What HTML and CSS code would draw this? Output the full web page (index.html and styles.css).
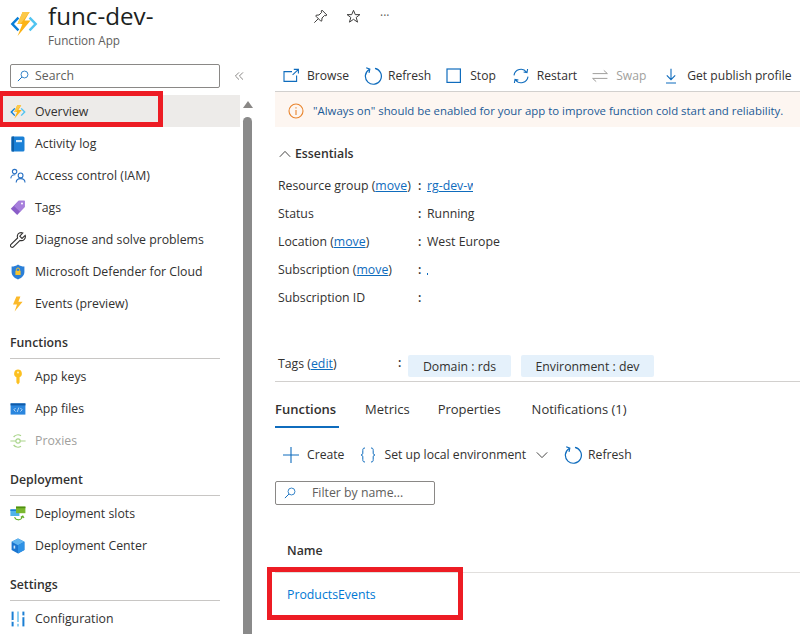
FILE: index.html
```html
<!DOCTYPE html>
<html lang="en">
<head>
<meta charset="utf-8">
<title>func-dev- Function App</title>
<link rel="stylesheet" href="styles.css">
</head>
<body>
<svg class="defs" width="0" height="0" aria-hidden="true">
  <defs>
    <symbol id="func" viewBox="0 0 28 28">
      <path d="M7.6 6.8 0.6 14l7 7.2 1.7-1.7L4 14l5.3-5.5z" fill="#0a7fd8"/>
      <path d="M20.4 6.8 27.4 14l-7 7.2-1.7-1.7L24 14l-5.3-5.5z" fill="#50c4f0"/>
      <path d="M19.6 2h-7L7.4 14h5L7.6 26 20.6 10.6h-6z" fill="#fbb316"/>
      <path d="M19.6 2h-7L7.4 14h3z" fill="#fcc94a"/>
    </symbol>
    <symbol id="refresh" viewBox="0 0 18 18">
      <path d="M5.2 2.4A8 8 0 1 0 11 1.4" fill="none" stroke="#0f6cbd" stroke-width="1.2"/>
      <path d="M2.2 0.8 5.8 2.2 5 5.8" fill="none" stroke="#0f6cbd" stroke-width="1.2"/>
    </symbol>
    <symbol id="lens" viewBox="0 0 16 16">
      <circle cx="10" cy="6" r="4.6" fill="none" stroke="#0f6cbd" stroke-width="1.1"/>
      <path d="M6.6 9.4 1.2 14.8" stroke="#0f6cbd" stroke-width="1.3"/>
    </symbol>
  </defs>
</svg>

<header class="header">
  <svg class="logo"><use href="#func"/></svg>
  <div class="titles">
    <h1 class="title">func-dev-</h1>
    <div class="subtitle">Function App</div>
  </div>
  <div class="header-actions">
    <svg class="ha-icon" viewBox="0 0 16 16"><path d="M9.6 1.2 14.8 6.4 13.8 7.2 12.4 6.8 9.6 9.6 9.4 12.6 8.4 13 3 7.6 3.4 6.6 6.4 6.4 9.2 3.6 8.8 2.2zM5.6 10.4 1.4 14.6" fill="none" stroke="#323130" stroke-width="1"/></svg>
    <svg class="ha-icon" viewBox="0 0 16 16"><path d="M8 1.4 9.9 6H14.8L10.9 9 12.3 14 8 11 3.7 14 5.1 9 1.2 6H6.1z" fill="none" stroke="#323130" stroke-width="1"/></svg>
    <span class="ha-more">···</span>
  </div>
</header>

<div class="layout">
  <aside class="sidebar">
    <div class="nav">
      <div class="search-row">
        <div class="search">
          <svg class="search-icon"><use href="#lens"/></svg>
          <span>Search</span>
        </div>
        <svg class="collapse" viewBox="0 0 10 10"><path d="M5 1.4 1.4 5 5 8.6M9 1.4 5.4 5 9 8.6" fill="none" stroke="#8a8886" stroke-width="1"/></svg>
      </div>

      <a class="item active"><svg class="ico"><use href="#func"/></svg>Overview</a>
      <a class="item"><svg class="ico" viewBox="0 0 16 16"><rect x="1.5" y="0.5" width="13" height="15" rx="1.5" fill="#1a80d6"/><rect x="1.5" y="0.5" width="2.5" height="15" fill="#0d5fa8"/><rect x="6" y="4" width="6" height="2.2" fill="#d8ecfb"/></svg>Activity log</a>
      <a class="item"><svg class="ico" viewBox="0 0 16 16"><g fill="none" stroke="#2a72c4" stroke-width="1.1"><circle cx="4.6" cy="3.6" r="2.2"/><path d="M0.8 10.4C1 7.4 3 6.6 5.4 6.8"/><circle cx="10.6" cy="7.4" r="2.4"/><path d="M6.2 14.6C6.2 11.8 8 10.6 10.6 10.6S15 11.8 15 14.6"/></g></svg>Access control (IAM)</a>
      <a class="item"><svg class="ico" viewBox="0 0 16 16"><path d="M8.6 0.8H14.6V7L7.2 15 0.8 8.8z" fill="#8a5dc8"/><path d="M8.6 0.8H14.6V7L10 11.8 4 6z" fill="#a77fdc"/><circle cx="12" cy="3.6" r="1" fill="#fff"/></svg>Tags</a>
      <a class="item"><svg class="ico" viewBox="0 0 16 16"><path d="M15.2 3.4 12 6.4 9.8 4.2 12.8 1C10.4 0 7.8 1.2 7.4 3.6 7.2 4.6 7.4 5.4 7.6 6L1 12.4C0.2 13.2 0.4 14.2 1 14.8S2.6 15.6 3.4 14.8L10 8.4C13 9.4 16.2 7 15.2 3.4z" fill="#fff" stroke="#323130" stroke-width="1.1"/></svg>Diagnose and solve problems</a>
      <a class="item"><svg class="ico" viewBox="0 0 16 16"><path d="M8 0.6C10 2 12 2.6 14.4 2.6V8C14.4 11.6 11.6 14 8 15.4 4.4 14 1.6 11.6 1.6 8V2.6C4 2.6 6 2 8 0.6z" fill="#2a7fd8"/><rect x="5.4" y="6.8" width="5.2" height="4.2" fill="#f6c330"/><path d="M6.4 6.8V5.6A1.6 1.6 0 0 1 9.6 5.6V6.8" fill="none" stroke="#f6c330" stroke-width="1"/></svg>Microsoft Defender for Cloud</a>
      <a class="item"><svg class="ico" viewBox="0 0 16 16"><path d="M10.4 0.4H6.4L3 8.6H7L4.6 15.6 12.6 5.8H8.4z" fill="#fbb92a"/></svg>Events (preview)</a>

      <div class="group">Functions</div>
      <a class="item"><svg class="ico" viewBox="0 0 16 16"><path d="M8 0.6A4 4 0 0 1 9.6 8.2V13.6L8 15.6 6.4 13.6V8.2A4 4 0 0 1 8 0.6z" fill="#fcc020"/><circle cx="8" cy="3.4" r="1" fill="#fff3c4"/></svg>App keys</a>
      <a class="item"><svg class="ico" viewBox="0 0 16 16"><rect x="0.6" y="2.4" width="14.8" height="11.2" fill="#2a86de"/><rect x="0.6" y="2.4" width="14.8" height="2" fill="#0f5aa8"/><path d="M5.6 7 3.8 8.8 5.6 10.6M10.4 7 12.2 8.8 10.4 10.6M8.8 6.6 7.2 11" fill="none" stroke="#cfe6fb" stroke-width="0.8"/></svg>App files</a>
      <a class="item dim"><svg class="ico" viewBox="0 0 16 16"><g fill="none" stroke="#a9d48a" stroke-width="1.2"><path d="M3.6 4A5.6 5.6 0 0 1 11 2.8M3.6 12A5.6 5.6 0 0 0 11 13.2"/><circle cx="8" cy="8" r="2.2"/><path d="M0.4 8H5.8M10.2 8H15.6"/></g></svg>Proxies</a>

      <div class="group">Deployment</div>
      <a class="item"><svg class="ico" viewBox="0 0 16 16"><rect x="0.4" y="3.4" width="9" height="6.6" fill="#50b4ea"/><rect x="0.4" y="3.4" width="9" height="1.6" fill="#1b7fd4"/><rect x="6" y="0.6" width="9.4" height="6.6" fill="#7ab82e"/><rect x="6" y="0.6" width="9.4" height="1.6" fill="#4f8f12"/><path d="M4.6 11.2C5.6 14.4 10.6 15.2 12.6 10.6M10.8 11.2 12.8 10 14 12" fill="none" stroke="#62ad24" stroke-width="1.1"/></svg>Deployment slots</a>
      <a class="item"><svg class="ico" viewBox="0 0 16 16"><path d="M8 0.6 14.4 3.8V12L8 15.4 1.6 12V3.8z" fill="#1b75cf"/><path d="M8 0.6 14.4 3.8 8 7.2 1.6 3.8z" fill="#62b6f0"/><path d="M8 7.2 14.4 3.8V12L8 15.4z" fill="#2e92e6"/><rect x="3.6" y="7.6" width="1.6" height="3" fill="#cde6fb"/></svg>Deployment Center</a>

      <div class="group">Settings</div>
      <a class="item"><svg class="ico" viewBox="0 0 16 16"><g stroke-width="2"><path d="M2.6 0.6V15.4" stroke="#1b7fd4"/><path d="M8 0.6V15.4" stroke="#8fd0f3"/><path d="M13.4 0.6V15.4" stroke="#1b7fd4"/></g><rect x="1.2" y="9" width="2.8" height="1.8" fill="#fff"/><rect x="6.6" y="11" width="2.8" height="1.8" fill="#fff"/><rect x="12" y="4.4" width="2.8" height="1.8" fill="#fff"/></svg>Configuration</a>
    </div>
    <div class="scrollbar">
      <span class="scroll-arrow"></span>
      <span class="scroll-thumb"></span>
    </div>
  </aside>

  <main class="main">
    <div class="toolbar">
      <span class="tool tool-browse"><svg class="t-icon" viewBox="0 0 16 16"><path d="M9 3.6H1V13.4H13.6V7.6M10.8 1.4H15.4V5.6M15.2 1.6 9.6 6.8" fill="none" stroke="#0f6cbd" stroke-width="1.1"/></svg>Browse</span>
      <span class="tool tool-refresh"><svg class="t-refresh"><use href="#refresh"/></svg>Refresh</span>
      <span class="tool tool-stop"><svg class="t-icon" viewBox="0 0 16 16"><rect x="1" y="1" width="13.4" height="13.4" fill="none" stroke="#0f6cbd" stroke-width="1.2"/></svg>Stop</span>
      <span class="tool tool-restart"><svg class="t-icon" viewBox="0 0 16 16"><g fill="none" stroke="#0f6cbd" stroke-width="1.1"><path d="M1 7.4A7 7 0 0 1 13.6 4.2M14.6 1 14 4.6 10.6 4"/><path d="M15 8.6A7 7 0 0 1 2.4 11.8M1.4 15 2 11.4 5.4 12"/></g></svg>Restart</span>
      <span class="tool tool-swap dim"><svg class="t-icon" viewBox="0 0 16 16"><path d="M0.6 5.6H15.4M11.8 2.4 15.4 5.6M15.4 10.4H0.6M4.2 13.6 0.6 10.4" fill="none" stroke="#a19f9d" stroke-width="1"/></svg>Swap</span>
      <span class="tool tool-get"><svg class="t-icon" viewBox="0 0 16 16"><path d="M8 0.8V11.4M3.8 7.4 8 11.6 12.2 7.4M3 15H13" fill="none" stroke="#0f6cbd" stroke-width="1.1"/></svg>Get publish profile</span>
    </div>

    <div class="banner">
      <svg class="b-icon" viewBox="0 0 16 16"><circle cx="8" cy="8" r="7" fill="none" stroke="#e9842c" stroke-width="1.1"/><path d="M8 7V12M8 4.2V5.6" stroke="#e9842c" stroke-width="1.1"/></svg>
      <span>"Always on" should be enabled for your app to improve function cold start and reliability.</span>
    </div>

    <div class="essentials-head">
      <svg class="chev" viewBox="0 0 12 8"><path d="M0.8 6.8 6 1.4 11.2 6.8" fill="none" stroke="#323130" stroke-width="0.9"/></svg>
      <span>Essentials</span>
    </div>

    <dl class="props">
      <div class="prop"><dt>Resource group (<a class="link">move</a>)</dt><dd><b class="colon">:</b><a class="link clip">rg-dev-west</a></dd></div>
      <div class="prop"><dt>Status</dt><dd><b class="colon">:</b>Running</dd></div>
      <div class="prop"><dt>Location (<a class="link">move</a>)</dt><dd><b class="colon">:</b>West Europe</dd></div>
      <div class="prop"><dt>Subscription (<a class="link">move</a>)</dt><dd><b class="colon">:</b><i class="speck"></i></dd></div>
      <div class="prop"><dt>Subscription ID</dt><dd><b class="colon">:</b></dd></div>
    </dl>

    <div class="tags-row">
      <span class="tags-label">Tags (<a class="link">edit</a>)</span>
      <b class="colon tags-colon">:</b>
      <span class="pill pill-a">Domain : rds</span>
      <span class="pill pill-b">Environment : dev</span>
    </div>

    <nav class="tabs">
      <span class="tab on">Functions</span>
      <span class="tab">Metrics</span>
      <span class="tab tab-props">Properties</span>
      <span class="tab">Notifications (1)</span>
    </nav>

    <div class="subtools">
      <span class="sub sub-create"><svg class="s-plus" viewBox="0 0 16 16"><path d="M8 0V16M0 8H16" stroke="#0f6cbd" stroke-width="1.1"/></svg>Create</span>
      <span class="sub sub-local"><svg class="s-braces" viewBox="0 0 16 16"><path d="M5 1C3 1 2.8 2 2.8 3.4V6C2.8 7.2 2.2 7.8 1 8 2.2 8.2 2.8 8.8 2.8 10V12.6C2.8 14 3 15 5 15M11 1C13 1 13.2 2 13.2 3.4V6C13.2 7.2 13.8 7.8 15 8 13.8 8.2 13.2 8.8 13.2 10V12.6C13.2 14 13 15 11 15" fill="none" stroke="#0f6cbd" stroke-width="1"/></svg>Set up local environment<svg class="s-chev" viewBox="0 0 12 8"><path d="M0.8 1.4 6 6.6 11.2 1.4" fill="none" stroke="#323130" stroke-width="0.9"/></svg></span>
      <span class="sub sub-refresh"><svg class="t-refresh"><use href="#refresh"/></svg>Refresh</span>
    </div>

    <div class="filter">
      <svg class="search-icon filter-icon"><use href="#lens"/></svg>
      <span>Filter by name...</span>
    </div>

    <div class="th">Name</div>
    <div class="td"><a class="fn-link">ProductsEvents</a></div>
  </main>
</div>

<div class="mark mark-overview"></div>
<div class="mark mark-fn"></div>
</body>
</html>
```
FILE: styles.css
```css
* { box-sizing: border-box; }
html, body { margin: 0; padding: 0; }
body {
  width: 800px;
  height: 634px;
  overflow: hidden;
  position: relative;
  background: #fff;
  color: #323130;
  font-family: "Open Sans", "Noto Sans", sans-serif;
  font-size: 12.3px;
  line-height: 16px;
}
.defs { position: absolute; }
a { color: inherit; text-decoration: none; }

.header { height: 60px; display: flex; }
.logo { width: 28px; height: 28px; margin: 10px 0 0 10px; flex: none; }
.titles { width: 265px; margin-left: 10px; }
.title { margin: 0; font-size: 24.2px; line-height: 32px; font-weight: 500; color: #201f1e; }
.subtitle { font-size: 11.7px; line-height: 16px; color: #605e5c; }
.header-actions { display: flex; align-items: center; height: 16px; margin-top: 8px; gap: 18px; }
.ha-icon { width: 15px; height: 15px; }
.ha-more { font-size: 12px; color: #605e5c; margin-left: 1px; }

.layout { display: flex; height: 574px; }
.sidebar { width: 253px; flex: none; display: flex; }
.nav { width: 240px; flex: none; }
.search-row { display: flex; align-items: center; height: 35px; padding: 4px 0 7px 10px; }
.search {
  width: 210px; height: 24px; flex: none; border: 1px solid #8a8886; border-radius: 2px;
  display: flex; align-items: center; gap: 6px; padding-left: 6px; color: #605e5c;
}
.search-icon { width: 12px; height: 12px; flex: none; }
.collapse { width: 10px; height: 10px; margin-left: 14px; flex: none; }
.item { display: flex; align-items: center; height: 32px; padding: 2px 0 0 10px; white-space: nowrap; }
.item.active { background: #edebe9; }
.item.dim { color: #a19f9d; }
.ico { width: 16px; height: 16px; flex: none; margin-right: 9px; }
.group {
  margin: 10px 20px 1px 10px; height: 30px; padding-top: 6px;
  border-bottom: 1px solid #c8c6c4; font-weight: 600;
}
.scrollbar { width: 13px; display: flex; flex-direction: column; align-items: center; padding-left: 2px; }
.scroll-arrow {
  margin-top: 41px; width: 0; height: 0;
  border-left: 5px solid transparent; border-right: 5px solid transparent;
  border-bottom: 7px solid #8a8886;
}
.scroll-thumb { margin-top: 9px; width: 9px; flex: 1; background: #8a8a8a; border-radius: 5px 5px 0 0; }

.main { flex: 1; min-width: 0; padding-left: 22px; overflow: hidden; }
.toolbar { display: flex; align-items: center; height: 32px; border-bottom: 1px solid #d2d0ce; white-space: nowrap; font-size: 12.1px; }
.tool { display: flex; align-items: center; flex: none; }
.tool-browse { margin-left: 8px; }
.tool-refresh { margin-left: 15px; }
.tool-stop { margin-left: 15px; }
.tool-restart { margin-left: 17px; }
.tool-swap { margin-left: 15px; }
.tool-get { margin-left: 17px; }
.dim { color: #a19f9d; }
.t-icon { width: 16px; height: 16px; margin-right: 8px; flex: none; }
.t-refresh { width: 18px; height: 18px; margin-right: 6px; flex: none; }

.banner {
  height: 35px; background: #fdf6f1; display: flex; align-items: center;
  padding: 3px 0 0 13px; gap: 9px; font-size: 11.4px; color: #1b5a96; white-space: nowrap;
}
.b-icon { width: 16px; height: 16px; flex: none; }

.essentials-head { display: flex; align-items: center; margin-top: 19px; height: 16px; padding-left: 4px; gap: 4px; font-weight: 600; }
.chev { width: 12px; height: 8px; }
.props { margin: 10px 0 0; padding-left: 3px; }
.prop { display: flex; height: 28px; align-items: center; }
.prop dt { width: 140px; flex: none; white-space: nowrap; }
.prop dd { margin: 0; display: flex; align-items: center; white-space: nowrap; }
.colon { font-weight: 600; width: 9px; flex: none; display: inline-block; }
.link { color: #0f6cbd; text-decoration: underline; }
.clip { display: block; width: 46px; overflow: hidden; }
.speck { display: block; width: 1px; height: 2px; background: #0f6cbd; margin-top: 8px; }

.tags-row { display: flex; align-items: flex-start; margin-top: 43px; height: 27px; border-bottom: 1px solid #d2d0ce; padding-left: 3px; }
.tags-label { width: 120px; margin-top: 1px; }
.tags-colon { width: 10px; }
.pill { height: 22px; background: #e5f1fb; border-radius: 2px; display: flex; align-items: center; justify-content: center; padding-top: 1px; }
.pill-a { width: 103px; }
.pill-b { width: 133px; margin-left: 10px; }

.tabs { display: flex; margin-top: 9px; height: 37px; font-size: 13px; }
.tab { margin-right: 28px; height: 37px; padding-top: 10px; }
.tab.on { font-weight: 600; border-bottom: 2px solid #0f6cbd; width: 64px; margin-right: 26px; }
.tab-props { margin-right: 31px; }

.subtools { display: flex; align-items: center; height: 20px; margin-top: 17px; padding-left: 8px; white-space: nowrap; font-size: 12.2px; }
.sub { display: flex; align-items: center; flex: none; }
.sub-local { margin-left: 16px; }
.sub-refresh { margin-left: 16px; }
.s-plus { width: 16px; height: 16px; margin-right: 8px; }
.s-braces { width: 16px; height: 16px; margin-right: 8px; }
.s-chev { width: 12px; height: 8px; margin-left: 10px; }

.filter {
  width: 160px; height: 24px; margin-top: 16px; border: 1px solid #8a8886; border-radius: 2px;
  display: flex; align-items: center; padding-left: 8px; gap: 16px; color: #605e5c;
}
.th { margin-top: 37px; height: 30px; padding: 1px 0 0 12px; font-weight: 600; }
.td { border-top: 1px solid #e1dfdd; height: 44px; padding: 14px 0 0 12px; }
.fn-link { color: #0078d4; }

.mark { position: absolute; border: 5px solid #ed1c24; pointer-events: none; }
.mark-overview { left: -2px; top: 91px; width: 165px; height: 36px; }
.mark-fn { left: 267px; top: 567px; width: 196px; height: 53px; }
```
